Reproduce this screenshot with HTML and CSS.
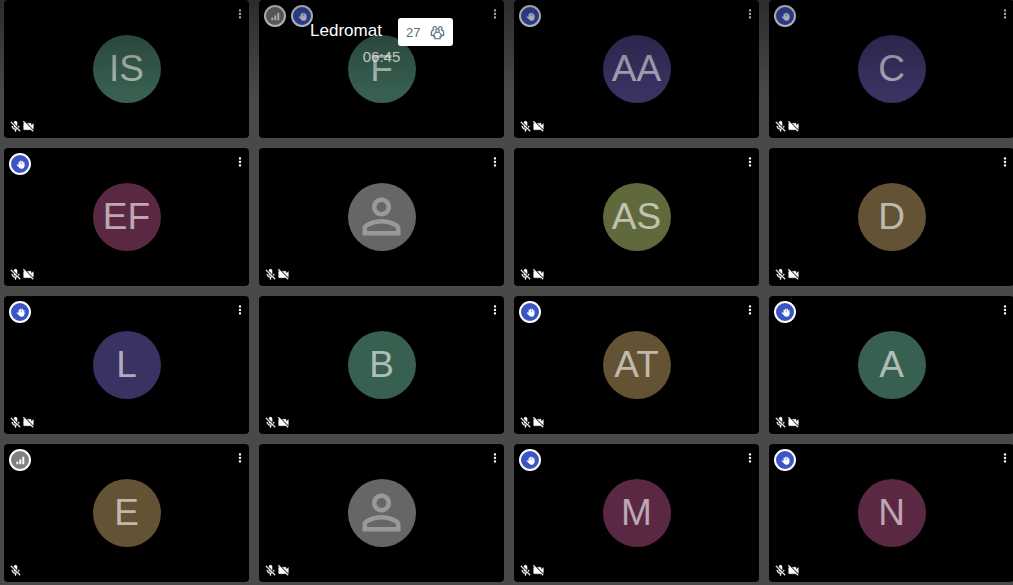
FILE: index.html
```html
<!DOCTYPE html>
<html lang="en">
<head>
    <meta charset="UTF-8">
    <meta name="viewport" content="width=device-width, initial-scale=1.0">
    <title>Ledromat</title>
    <link rel="stylesheet" href="styles.css">
</head>
<body>
    <svg class="sprite" aria-hidden="true">
        <symbol id="icon-more" viewBox="0 0 24 24">
            <path d="M12 8c1.1 0 2-.9 2-2s-.9-2-2-2-2 .9-2 2 .9 2 2 2zm0 2c-1.1 0-2 .9-2 2s.9 2 2 2 2-.9 2-2-.9-2-2-2zm0 6c-1.1 0-2 .9-2 2s.9 2 2 2 2-.9 2-2-.9-2-2-2z"/>
        </symbol>
        <symbol id="icon-mic-off" viewBox="0 0 24 24">
            <path stroke="currentColor" stroke-width=".6" d="M19 11h-1.700c0 .74-.16 1.430-.43 2.050l1.230 1.230c.56-.98.9-2.090.9-3.280zm-4.020.17c0-.06.02-.11.02-.17V5c0-1.660-1.340-3-3-3S9 3.340 9 5v.18l5.980 5.990zM4.270 3L3 4.270l6.010 6.010V11c0 1.660 1.330 3 2.990 3 .22 0 .44-.03.65-.08l1.660 1.660c-.71.33-1.500.52-2.310.52-2.760 0-5.300-2.100-5.300-5.100H5c0 3.410 2.720 6.230 6 6.720V21h2v-3.280c.91-.13 1.770-.45 2.540-.9L19.730 21 21 19.730 4.270 3z"/>
        </symbol>
        <symbol id="icon-cam-off" viewBox="0 0 24 24">
            <path stroke="currentColor" stroke-width=".6" d="M21 6.500l-4 4V7c0-.55-.45-1-1-1H9.820L21 17.180V6.500zM3.270 2L2 3.270 4.730 6H4c-.55 0-1 .45-1 1v10c0 .55.45 1 1 1h12c.21 0 .39-.08.54-.18L19.730 21 21 19.730 3.270 2z"/>
        </symbol>
        <symbol id="icon-hand" viewBox="0 0 24 24">
            <rect x="7" y="4" width="3.400" height="12" rx="1.700"/>
            <rect x="11" y="1" width="3.400" height="14" rx="1.700"/>
            <rect x="15" y="2" width="3.400" height="14" rx="1.700"/>
            <rect x="19" y="5" width="3.400" height="12" rx="1.700"/>
            <path d="M7 11h15.400v5c0 4-2.400 7-6.400 7h-2c-3 0-4.800-1.200-6.400-3.500L1.500 13c1-1.500 3-1.600 4.300-.4L7 13.700z"/>
        </symbol>
        <symbol id="icon-signal" viewBox="0 0 24 24">
            <rect x="1" y="15" width="5" height="7"/>
            <rect x="9" y="9" width="5" height="13"/>
            <rect x="17" y="2" width="5" height="20"/>
        </symbol>
        <symbol id="icon-person" viewBox="0 0 24 24">
            <path d="M12 5.900a2.100 2.100 0 1 1 0 4.200 2.100 2.100 0 0 1 0-4.200m0 9c2.970 0 6.100 1.460 6.100 2.100v1.100H5.900V17c0-.64 3.130-2.100 6.100-2.100M12 4C9.790 4 8 5.790 8 8s1.790 4 4 4 4-1.790 4-4-1.790-4-4-4zm0 9c-2.670 0-8 1.340-8 4v3h16v-3c0-2.660-5.330-4-8-4z"/>
        </symbol>
        <symbol id="icon-people" viewBox="0 0 24 24">
            <g fill="none" stroke="currentColor" stroke-width="1.900" stroke-linejoin="round" stroke-linecap="round">
                <circle cx="12" cy="9" r="2.800"/>
                <path d="M10.200 5A2.700 2.700 0 1 0 5.800 7.400M13.800 5a2.700 2.700 0 1 1 4.400 2.400"/>
                <path d="M5.800 7.400C3.500 8.400 2 10.400 2 13v3.500h4M18.200 7.400C20.500 8.400 22 10.400 22 13v3.500h-4"/>
                <path d="M9.600 12C7.500 12.800 6 14.600 6 17v1.500h1.800V22h8.400v-3.500H18V17c0-2.400-1.500-4.200-3.600-5"/>
            </g>
        </symbol>
    </svg>

    <header class="subject-bar">
        <div class="subject">
            <div class="subject-row">
                <h1 class="subject-name">Ledromat</h1>
                <button class="participants-button" aria-label="Participants">
                    <span>27</span>
                    <svg class="people-icon"><use href="#icon-people"/></svg>
                </button>
            </div>
            <span class="timer">06:45</span>
        </div>
    </header>

    <main class="grid">
        <div class="tile">
            <div class="avatar green">IS</div>
            <button class="more-button" aria-label="More"><svg><use href="#icon-more"/></svg></button>
            <div class="status"><svg><use href="#icon-mic-off"/></svg><svg><use href="#icon-cam-off"/></svg></div>
        </div>
        <div class="tile">
            <div class="badges">
                <span class="badge signal"><svg><use href="#icon-signal"/></svg></span>
                <span class="badge"><svg><use href="#icon-hand"/></svg></span>
            </div>
            <div class="avatar green">F</div>
            <button class="more-button" aria-label="More"><svg><use href="#icon-more"/></svg></button>
        </div>
        <div class="tile">
            <div class="badges"><span class="badge"><svg><use href="#icon-hand"/></svg></span></div>
            <div class="avatar purple">AA</div>
            <button class="more-button" aria-label="More"><svg><use href="#icon-more"/></svg></button>
            <div class="status"><svg><use href="#icon-mic-off"/></svg><svg><use href="#icon-cam-off"/></svg></div>
        </div>
        <div class="tile">
            <div class="badges"><span class="badge"><svg><use href="#icon-hand"/></svg></span></div>
            <div class="avatar purple">C</div>
            <button class="more-button" aria-label="More"><svg><use href="#icon-more"/></svg></button>
            <div class="status"><svg><use href="#icon-mic-off"/></svg><svg><use href="#icon-cam-off"/></svg></div>
        </div>

        <div class="tile">
            <div class="badges"><span class="badge"><svg><use href="#icon-hand"/></svg></span></div>
            <div class="avatar maroon">EF</div>
            <button class="more-button" aria-label="More"><svg><use href="#icon-more"/></svg></button>
            <div class="status"><svg><use href="#icon-mic-off"/></svg><svg><use href="#icon-cam-off"/></svg></div>
        </div>
        <div class="tile">
            <div class="avatar gray"><svg><use href="#icon-person"/></svg></div>
            <button class="more-button" aria-label="More"><svg><use href="#icon-more"/></svg></button>
            <div class="status"><svg><use href="#icon-mic-off"/></svg><svg><use href="#icon-cam-off"/></svg></div>
        </div>
        <div class="tile">
            <div class="avatar olive">AS</div>
            <button class="more-button" aria-label="More"><svg><use href="#icon-more"/></svg></button>
            <div class="status"><svg><use href="#icon-mic-off"/></svg><svg><use href="#icon-cam-off"/></svg></div>
        </div>
        <div class="tile">
            <div class="avatar brown">D</div>
            <button class="more-button" aria-label="More"><svg><use href="#icon-more"/></svg></button>
            <div class="status"><svg><use href="#icon-mic-off"/></svg><svg><use href="#icon-cam-off"/></svg></div>
        </div>

        <div class="tile">
            <div class="badges"><span class="badge"><svg><use href="#icon-hand"/></svg></span></div>
            <div class="avatar purple">L</div>
            <button class="more-button" aria-label="More"><svg><use href="#icon-more"/></svg></button>
            <div class="status"><svg><use href="#icon-mic-off"/></svg><svg><use href="#icon-cam-off"/></svg></div>
        </div>
        <div class="tile">
            <div class="avatar green">B</div>
            <button class="more-button" aria-label="More"><svg><use href="#icon-more"/></svg></button>
            <div class="status"><svg><use href="#icon-mic-off"/></svg><svg><use href="#icon-cam-off"/></svg></div>
        </div>
        <div class="tile">
            <div class="badges"><span class="badge"><svg><use href="#icon-hand"/></svg></span></div>
            <div class="avatar brown">AT</div>
            <button class="more-button" aria-label="More"><svg><use href="#icon-more"/></svg></button>
            <div class="status"><svg><use href="#icon-mic-off"/></svg><svg><use href="#icon-cam-off"/></svg></div>
        </div>
        <div class="tile">
            <div class="badges"><span class="badge"><svg><use href="#icon-hand"/></svg></span></div>
            <div class="avatar green">A</div>
            <button class="more-button" aria-label="More"><svg><use href="#icon-more"/></svg></button>
            <div class="status"><svg><use href="#icon-mic-off"/></svg><svg><use href="#icon-cam-off"/></svg></div>
        </div>

        <div class="tile">
            <div class="badges"><span class="badge signal"><svg><use href="#icon-signal"/></svg></span></div>
            <div class="avatar brown">E</div>
            <button class="more-button" aria-label="More"><svg><use href="#icon-more"/></svg></button>
            <div class="status"><svg><use href="#icon-mic-off"/></svg></div>
        </div>
        <div class="tile">
            <div class="avatar gray"><svg><use href="#icon-person"/></svg></div>
            <button class="more-button" aria-label="More"><svg><use href="#icon-more"/></svg></button>
            <div class="status"><svg><use href="#icon-mic-off"/></svg><svg><use href="#icon-cam-off"/></svg></div>
        </div>
        <div class="tile">
            <div class="badges"><span class="badge"><svg><use href="#icon-hand"/></svg></span></div>
            <div class="avatar maroon">M</div>
            <button class="more-button" aria-label="More"><svg><use href="#icon-more"/></svg></button>
            <div class="status"><svg><use href="#icon-mic-off"/></svg><svg><use href="#icon-cam-off"/></svg></div>
        </div>
        <div class="tile">
            <div class="badges"><span class="badge"><svg><use href="#icon-hand"/></svg></span></div>
            <div class="avatar maroon">N</div>
            <button class="more-button" aria-label="More"><svg><use href="#icon-more"/></svg></button>
            <div class="status"><svg><use href="#icon-mic-off"/></svg><svg><use href="#icon-cam-off"/></svg></div>
        </div>
    </main>
</body>
</html>
```
FILE: styles.css
```css
* {
    margin: 0;
    padding: 0;
    box-sizing: border-box;
}

body {
    background-color: #494949;
    color: white;
    font-family: "Liberation Sans", Arial, sans-serif;
    overflow-x: hidden;
}

button {
    border: none;
    font-family: inherit;
    cursor: pointer;
}

svg {
    display: block;
    fill: currentColor;
}

.sprite {
    display: none;
}

/* both the header and the tiles share the same four columns */
.grid,
.subject-bar {
    display: grid;
    grid-template-columns: repeat(4, 1fr);
    gap: 10px;
    padding-left: 4px;
}

.grid {
    margin-right: -1px;
    padding-bottom: 3px;
}

.subject-bar {
    position: absolute;
    top: 0;
    left: 0;
    right: -1px;
    z-index: 2;
    height: 96px;
    padding-top: 18px;
    background: linear-gradient(to bottom, rgba(0, 0, 0, 0.4), rgba(0, 0, 0, 0));
    pointer-events: none;
}

.subject {
    grid-column: 2;
    display: flex;
    flex-direction: column;
    align-items: center;
}

.subject-row {
    display: flex;
    gap: 16px;
}

.subject-name {
    font-size: 17px;
    font-weight: normal;
    line-height: 26px;
}

.participants-button {
    display: flex;
    align-items: center;
    justify-content: space-between;
    width: 55px;
    height: 28px;
    padding: 0 8px;
    border-radius: 3px;
    background-color: white;
    color: #5e6d7a;
    font-size: 13px;
    pointer-events: auto;
}

.people-icon {
    width: 15px;
    height: 15px;
}

.timer {
    color: rgba(255, 255, 255, 0.7);
    font-size: 15px;
    line-height: 22px;
}

.tile {
    position: relative;
    display: flex;
    align-items: center;
    justify-content: center;
    aspect-ratio: 245 / 138;
    border-radius: 4px;
    background-color: black;
}

.avatar {
    display: flex;
    align-items: center;
    justify-content: center;
    width: 68px;
    height: 68px;
    padding-bottom: 1px;
    border-radius: 50%;
    color: rgba(255, 255, 255, 0.6);
    font-size: 37px;
    line-height: 40px;
}

.avatar svg {
    width: 57px;
    height: 57px;
}

.green { background-color: #386050; }
.purple { background-color: #3b3264; }
.maroon { background-color: #5b2843; }
.olive { background-color: #5f693b; }
.brown { background-color: #635234; }

.gray {
    background-color: #666;
    color: #999;
}

.badges {
    position: absolute;
    top: 5px;
    left: 5px;
    display: flex;
    gap: 5px;
}

.badge {
    display: flex;
    align-items: center;
    justify-content: center;
    width: 22px;
    height: 22px;
    border: 2px solid white;
    border-radius: 50%;
    background-color: #3b56c4;
}

.badge.signal {
    background-color: #808080;
}

.badge svg {
    width: 9px;
    height: 9px;
}

.more-button {
    position: absolute;
    top: 7px;
    right: 2px;
    background: none;
    color: white;
}

.more-button svg {
    width: 14px;
    height: 14px;
}

.status {
    position: absolute;
    left: 5px;
    bottom: 5px;
    display: flex;
}

.status svg {
    width: 13px;
    height: 13px;
}
```
